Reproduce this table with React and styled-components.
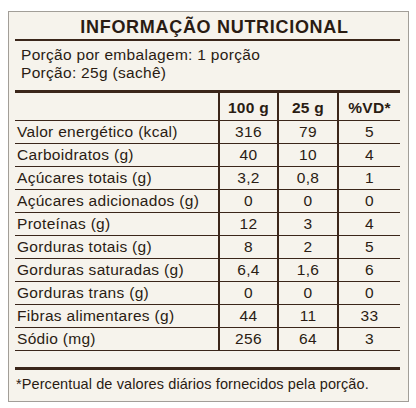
import React from "react"
import styled, { createGlobalStyle } from "styled-components"

const ink = "#2a1c13"
const rule = "#3b261a"

const GlobalStyle = createGlobalStyle`
  body {
    margin: 0;
    background: #ffffff;
    font-family: "Liberation Sans", Arial, sans-serif;
    color: ${ink};
  }
`

const Panel = styled.section`
  box-sizing: border-box;
  width: 401px;
  height: 391px;
  margin: 11px 0 0 8px;
  padding: 0 8px 0 6px;
  border: 1px solid #a29e98;
  background: #f6f3ec;
  display: flex;
  flex-direction: column;
`

const Title = styled.h1`
  margin: 0;
  height: 24px;
  padding: 3px 0 0 14px;
  font-size: 18px;
  letter-spacing: 0.7px;
  line-height: 24px;
  font-weight: 700;
  text-align: center;
  border-bottom: 2px solid ${rule};
`

const Serving = styled.div`
  padding: 5px 0 0 6px;
  height: 44px;
  font-size: 15.5px;
  letter-spacing: 0.3px;
  line-height: 18px;
  border-bottom: 3px solid ${rule};
`

const Table = styled.table`
  width: 100%;
  border-collapse: collapse;
  table-layout: fixed;
  font-size: 15.5px;
  letter-spacing: 0.3px;
`

const HeadCell = styled.th`
  box-sizing: border-box;
  height: 27px;
  padding: 4px 0 0;
  font-weight: 700;
  text-align: center;
  vertical-align: middle;
  border-bottom: 1px solid ${rule};
  border-left: ${p => (p.$first ? "none" : `2px solid ${rule}`)};
`

const LabelCell = styled.td`
  height: 22px;
  padding: 0 0 0 2px;
  border-bottom: 1px solid ${rule};
  white-space: nowrap;
`

const NumCell = styled.td`
  height: 22px;
  padding: 0;
  text-align: center;
  border-bottom: 1px solid ${rule};
  border-left: 2px solid ${rule};
`

const Footer = styled.div`
  margin-top: 16px;
  padding: 5px 0 0 1px;
  border-top: 3px solid ${rule};
  font-size: 14.5px;
  letter-spacing: 0.1px;
  line-height: 18px;
  white-space: nowrap;
`

const rows = [
  ["Valor energético (kcal)", "316", "79", "5"],
  ["Carboidratos (g)", "40", "10", "4"],
  ["Açúcares totais (g)", "3,2", "0,8", "1"],
  ["Açúcares adicionados (g)", "0", "0", "0"],
  ["Proteínas (g)", "12", "3", "4"],
  ["Gorduras totais (g)", "8", "2", "5"],
  ["Gorduras saturadas (g)", "6,4", "1,6", "6"],
  ["Gorduras trans (g)", "0", "0", "0"],
  ["Fibras alimentares (g)", "44", "11", "33"],
  ["Sódio (mg)", "256", "64", "3"],
]

export default function App() {
  return (
    <>
      <GlobalStyle />
      <Panel>
        <Title>INFORMAÇÃO NUTRICIONAL</Title>
        <Serving>
          Porção por embalagem: 1 porção
          <br />
          Porção: 25g (sachê)
        </Serving>
        <Table>
          <colgroup>
            <col style={{ width: 204 }} />
            <col style={{ width: 59 }} />
            <col style={{ width: 60 }} />
            <col />
          </colgroup>
          <thead>
            <tr>
              <HeadCell $first />
              <HeadCell>100 g</HeadCell>
              <HeadCell>25 g</HeadCell>
              <HeadCell>%VD*</HeadCell>
            </tr>
          </thead>
          <tbody>
            {rows.map(([label, a, b, c]) => (
              <tr key={label}>
                <LabelCell>{label}</LabelCell>
                <NumCell>{a}</NumCell>
                <NumCell>{b}</NumCell>
                <NumCell>{c}</NumCell>
              </tr>
            ))}
          </tbody>
        </Table>
        <Footer>*Percentual de valores diários fornecidos pela porção.</Footer>
      </Panel>
    </>
  )
}
